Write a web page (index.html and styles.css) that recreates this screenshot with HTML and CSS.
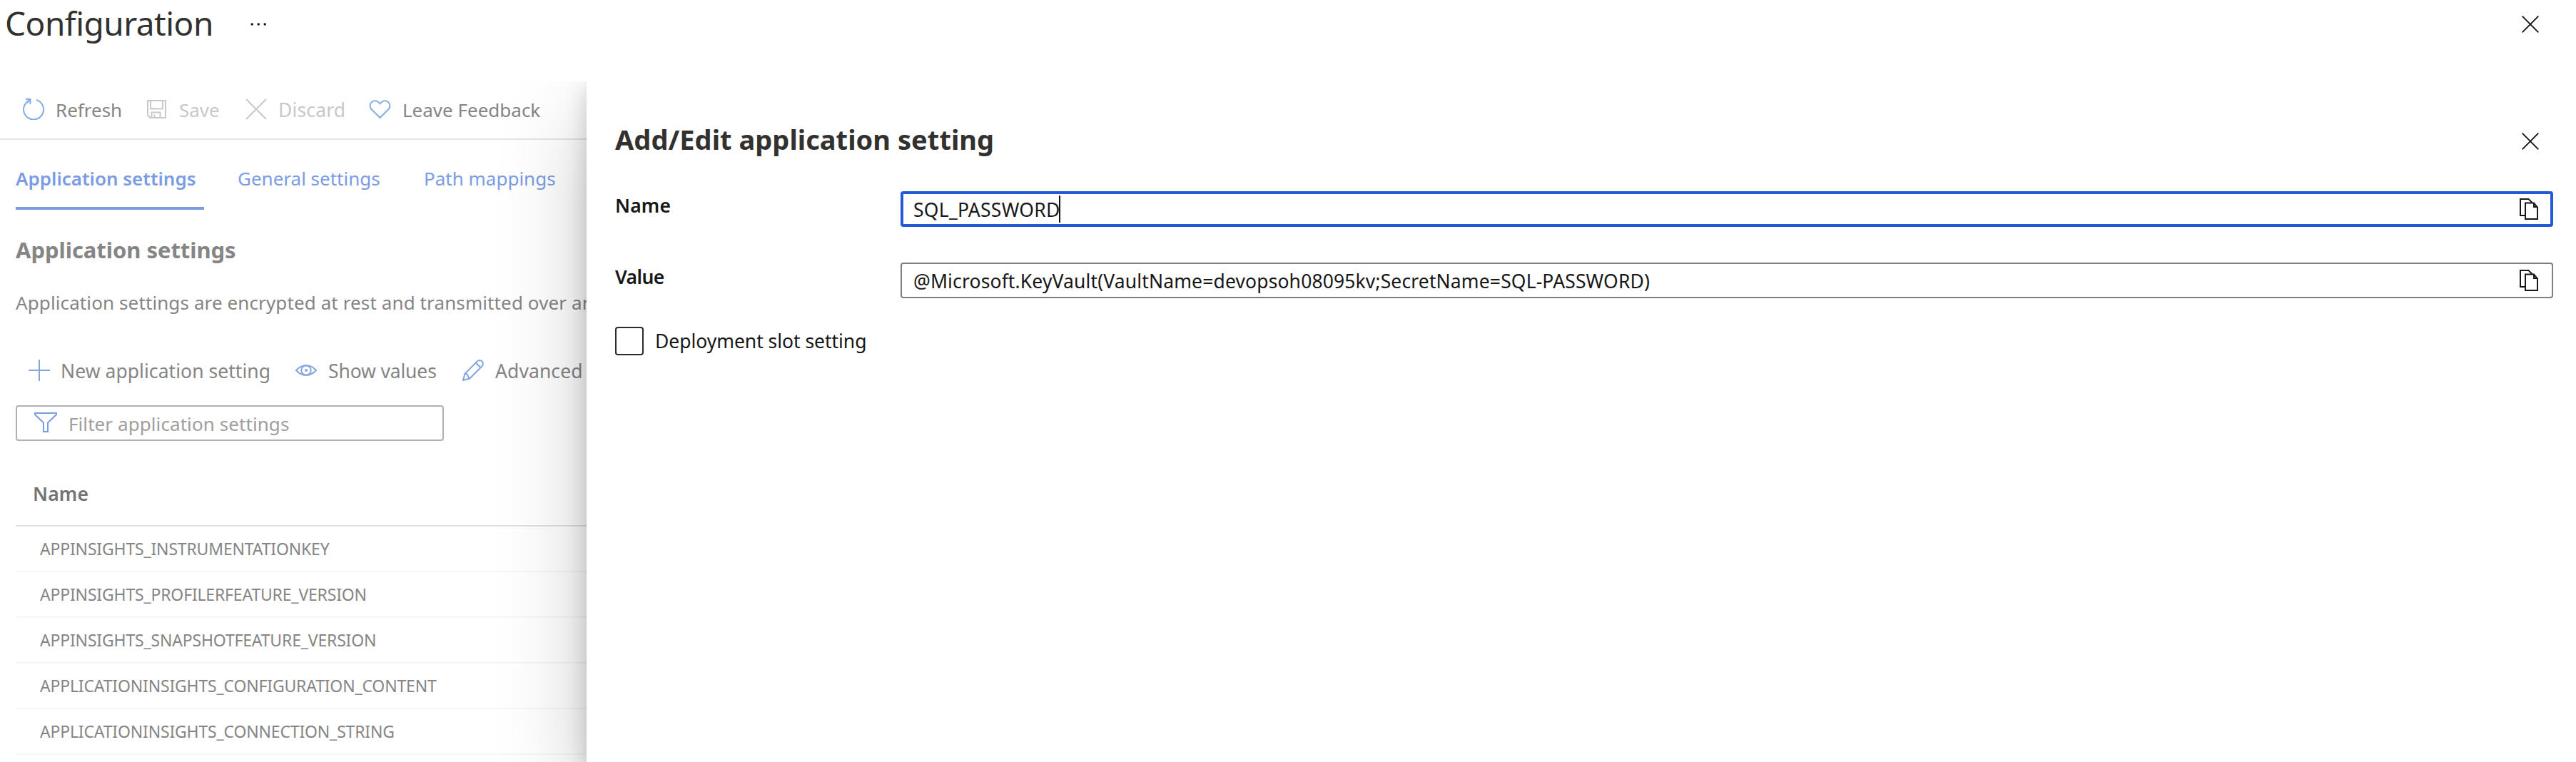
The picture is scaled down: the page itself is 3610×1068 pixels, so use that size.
FILE: index.html
```html
<!DOCTYPE html>
<html lang="en">
<head>
<meta charset="utf-8">
<title>Configuration</title>
<link rel="stylesheet" href="styles.css">
</head>
<body>
<header class="page-header">
  <h1>Configuration</h1>
  <svg class="more" width="24" height="4" viewBox="0 0 24 4"><path d="M0.7 .5h3v3h-3zM9.7 .5h3v3h-3zM18.7 .5h3v3h-3z"/></svg>
  <svg class="close" width="24" height="24" viewBox="0 0 24 24"><path d="M.7.7l22.6 22.6M23.3.7L.7 23.3"/></svg>
</header>
<main class="workspace">
  <section class="blade">
    <nav class="toolbar">
      <button class="tool refresh"><svg width="30" height="30" viewBox="0 0 30 30"><path d="M19 2a14 14 0 1 1-8.500.2M4 1h6.500v7M10.500 1.500L6 6"/></svg><span>Refresh</span></button>
      <button class="tool save off"><svg width="27" height="26" viewBox="0 0 27 26"><path d="M1 1h25v24H4.500L1 21.500zM5 1v11.500h17V1M6.500 25v-7.500h12V25M10.500 25v-4.500"/></svg><span>Save</span></button>
      <button class="tool discard off"><svg width="30" height="30" viewBox="0 0 30 30"><path d="M1 1l28 28M29 1L1 29"/></svg><span>Discard</span></button>
      <button class="tool feedback"><svg width="31" height="27" viewBox="0 0 31 27"><path d="M15.500 25L3.200 12.800A7 7 0 0 1 13 2.900L15.500 5.400 18 2.900A7 7 0 0 1 27.800 12.800z"/></svg><span>Leave Feedback</span></button>
    </nav>
    <nav class="tabs">
      <a class="tab active">Application settings</a>
      <a class="tab general">General settings</a>
      <a class="tab paths">Path mappings</a>
    </nav>
    <h2>Application settings</h2>
    <p class="intro">Application settings are encrypted at rest and transmitted over an</p>
    <div class="commands">
      <button class="tool new"><svg width="30" height="30" viewBox="0 0 30 30"><path d="M15 0v30M0 15h30"/></svg><span>New application setting</span></button>
      <button class="tool show"><svg width="30" height="30" viewBox="0 0 30 30"><path d="M1 15Q7 8.200 15 8.200T29 15Q23 21.800 15 21.800T1 15z"/><circle cx="15" cy="15" r="6.700"/><circle class="dot" cx="15" cy="15" r="2"/></svg><span>Show values</span></button>
      <button class="tool advanced"><svg width="30" height="30" viewBox="0 0 30 30"><path d="M1 29L3.500 19.800 20.800 2.500a4.700 4.700 0 0 1 6.700 6.700L10.200 26.500zM18.800 4.500l6.700 6.700M3.500 19.800q4 .4 4.200 2.600t2.500 4.100"/></svg><span>Advanced</span></button>
    </div>
    <div class="filter">
      <svg width="32" height="28" viewBox="0 0 32 28"><path d="M1 1h30v2L19 14.500V27h-6V14.500L1 3z"/></svg>
      <span>Filter application settings</span>
    </div>
    <div class="table">
      <div class="table-head">Name</div>
      <div class="row">APPINSIGHTS_INSTRUMENTATIONKEY</div>
      <div class="row">APPINSIGHTS_PROFILERFEATURE_VERSION</div>
      <div class="row">APPINSIGHTS_SNAPSHOTFEATURE_VERSION</div>
      <div class="row">APPLICATIONINSIGHTS_CONFIGURATION_CONTENT</div>
      <div class="row">APPLICATIONINSIGHTS_CONNECTION_STRING</div>
      <div class="row"></div>
    </div>
  </section>
  <section class="panel">
    <div class="panel-head">
      <h2>Add/Edit application setting</h2>
      <svg class="close" width="24" height="24" viewBox="0 0 24 24"><path d="M.7.7l22.600 22.600M23.300.7L.7 23.300"/></svg>
    </div>
    <div class="field">
      <label>Name</label>
      <div class="input focused"><span class="setting-name">SQL_PASSWORD</span><i class="caret"></i>
        <svg class="copy" width="26" height="30" viewBox="0 0 26 30"><path d="M8 24H1V1h11.500l5.500 5.500M8 6.500h12l5 6V29H8zM20 6.500V12h5"/></svg></div>
    </div>
    <div class="field">
      <label class="value-label">Value</label>
      <div class="input"><span class="setting-value">@Microsoft.KeyVault(VaultName=devopsoh08095kv;SecretName=SQL-PASSWORD)</span>
        <svg class="copy" width="26" height="30" viewBox="0 0 26 30"><path d="M8 24H1V1h11.500l5.500 5.500M8 6.500h12l5 6V29H8zM20 6.500V12h5"/></svg></div>
    </div>
    <div class="slot"><i class="checkbox"></i><span>Deployment slot setting</span></div>
  </section>
</main>
</body>
</html>
```
FILE: styles.css
```css
* { box-sizing: border-box; }
body {
  margin: 0;
  height: 1068px;
  overflow: hidden;
  background: #fff;
  color: #171717;
  font: 26px/36px "Noto Sans", "Open Sans", sans-serif;
  white-space: nowrap;
}
h1, h2, p { margin: 0; }
svg { display: block; flex: none; fill: none; stroke: currentColor; stroke-width: 2; }
button { border: 0; padding: 0; background: none; font: inherit; color: inherit; }

.page-header { display: flex; align-items: flex-start; height: 114px; padding: 0 52px 0 7px; }
h1 { width: 344px; font-size: 46px; font-weight: 400; line-height: 64px; letter-spacing: -.5px; color: #323130; }
.more { margin-top: 32px; fill: #111; stroke: none; }
.close { margin-left: auto; stroke-width: 1.8; color: #111; }
.page-header .close { margin-top: 22px; }

.workspace { display: flex; height: 954px; overflow: hidden; }
.blade { width: 822px; flex: none; color: #858585; overflow: hidden; }

.toolbar { display: flex; align-items: center; height: 82px; padding: 0 0 2px 32px; border-bottom: 2px solid #e5e5e5; }
.tool { display: flex; align-items: center; flex: none; }
.toolbar .tool span { padding-top: 1px; }
.tool svg { color: #82aee6; }
.tool.off { color: #c8c8c8; }
.tool.off svg { color: #c8c8c8; }
.refresh { width: 174px; gap: 16px; }
.save { width: 138px; gap: 18px; }
.discard { width: 173px; gap: 16px; font-size: 26.5px; letter-spacing: .15px; }
.feedback { gap: 16px; }

.tabs { display: flex; padding-left: 22px; color: #7b9ce4; }
.tab { height: 98px; padding-top: 34px; line-height: 40px; }
.active { width: 264px; margin-right: 47px; font-weight: 600; border-bottom: 4px solid #7b9ce4; }
.general { width: 261px; }

.blade h2 { margin: 34px 0 0 22px; font-size: 31px; font-weight: 700; line-height: 44px; letter-spacing: -.05px; }
.intro { margin: 34px 0 0 22px; letter-spacing: .11px; }

.commands { display: flex; height: 40px; margin: 57px 0 0 40px; font-size: 26.5px; }
.commands .tool svg { color: #82a7dc; }
.commands .tool span { padding-top: 2px; }
.commands .dot { fill: currentColor; stroke: none; }
.new { width: 374px; gap: 15px; letter-spacing: .05px; }
.show { width: 234px; gap: 16px; letter-spacing: -.15px; }
.advanced { gap: 16px; letter-spacing: .08px; }

.filter { display: flex; align-items: center; width: 600px; height: 50px; margin: 29px 0 0 22px; padding-left: 24px; gap: 16px; border: 2px solid #b0b0b0; border-radius: 4px; color: #9e9e9e; letter-spacing: .08px; }
.filter svg { color: #7b9ce4; margin-top: -2px; }
.filter span { padding-top: 2px; }

.table { margin-left: 22px; }
.table-head { height: 120px; padding: 54px 0 0 24px; border-bottom: 2px solid #dde2e7; font-size: 26.5px; font-weight: 600; line-height: 40px; letter-spacing: .15px; color: #737373; }
.row { height: 64px; padding-left: 34px; border-bottom: 2px solid #f6f6f6; font-size: 23px; line-height: 62px; letter-spacing: -.18px; }

.panel { position: relative; flex: 1; padding: 53px 32px 0 40px; background: #fff; box-shadow: 0 51px 115px rgba(0, 0, 0, .22), 0 10px 29px rgba(0, 0, 0, .18); font-size: 26.5px; }
.panel-head { display: flex; align-items: center; height: 56px; padding-right: 20px; margin-bottom: 45px; }
.panel-head h2 { font-size: 38px; font-weight: 700; line-height: 56px; letter-spacing: .04px; color: #323130; }
.panel-head .close { margin-top: 6px; }
.field { display: grid; grid-template-columns: 400px 1fr; height: 50px; margin-bottom: 50px; }
.field label { padding-top: 1px; font-weight: 600; line-height: 38px; letter-spacing: .15px; }
.field .value-label { letter-spacing: -.6px; }
.input { display: flex; align-items: center; padding: 0 19px 0 16px; border: 2px solid #7f7f7f; border-radius: 4px; }
.input span { padding-top: 2px; }
.input.focused { padding: 0 17px 0 14px; border: 4px solid #2459d6; }
.setting-name { letter-spacing: .25px; }
.setting-value { letter-spacing: .13px; }
.caret { width: 2px; height: 38px; margin-left: -2px; background: #111; }
.copy { margin-left: auto; }
.slot { display: flex; align-items: center; gap: 16px; height: 40px; margin-top: -10px; letter-spacing: -.04px; }
.checkbox { width: 40px; height: 40px; border: 2px solid #2b2b2b; border-radius: 4px; }
```
